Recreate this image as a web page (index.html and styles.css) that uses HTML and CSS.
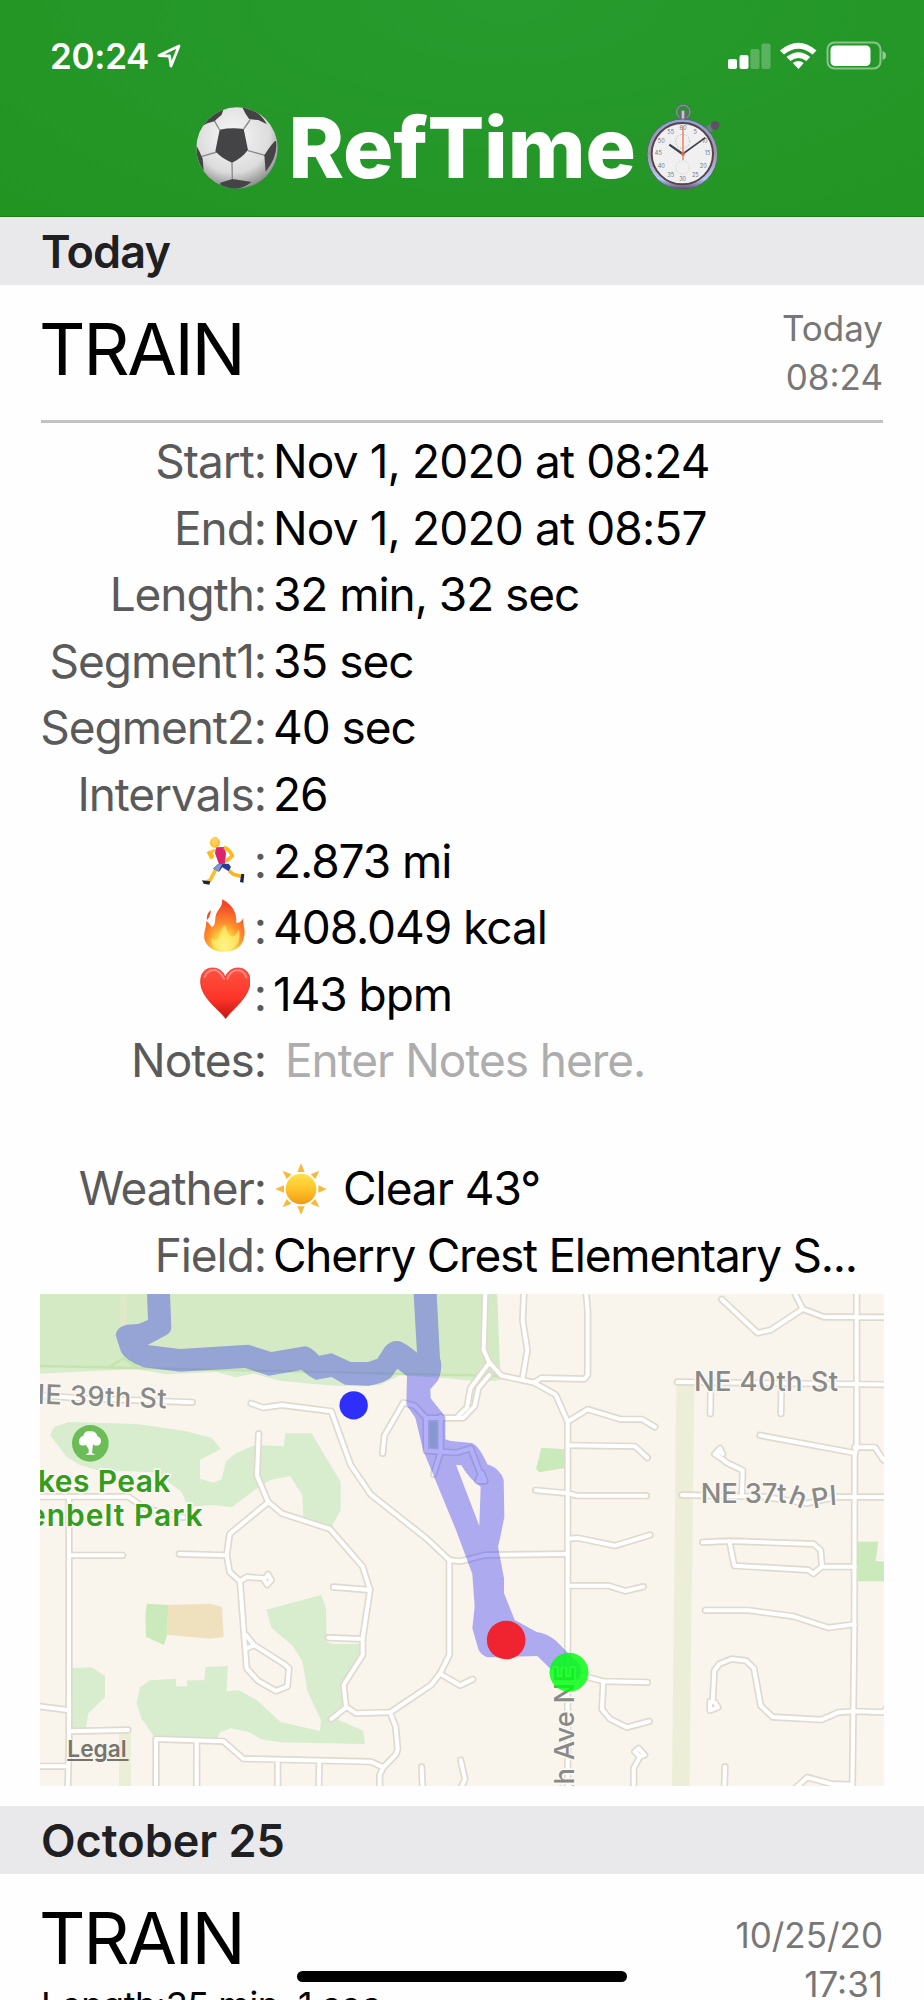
FILE: index.html
```html
<!DOCTYPE html>
<html lang="en">
<head>
    <meta charset="UTF-8">
    <meta name="viewport" content="width=device-width, initial-scale=1.0">
    <title>RefTime</title>
    <link rel="stylesheet" href="styles.css">
</head>
<body>
<div class="phone">
    <header class="header">
        <div class="status">
            <span class="clock">20:24</span>
            <svg class="location" width="24" height="24" viewBox="0 0 24 24">
                <path d="M2 11.5 22 2 14 22 12.5 12Z" fill="none" stroke="#fff" stroke-width="2.8" stroke-linejoin="round"/>
            </svg>
            <svg class="signal" width="160" height="30" viewBox="0 0 160 30" fill="#fff">
                <rect x="0" y="18" width="9" height="10" rx="2"/>
                <rect x="11.500" y="14" width="9" height="14" rx="2"/>
                <rect x="22.500" y="8" width="9" height="20" rx="2" opacity=".25"/>
                <rect x="33.500" y="2.500" width="9" height="25.500" rx="2" opacity=".25"/>
                <path d="M52 9.500Q70.500-6 88.500 9.500L84.500 13.600Q70.500 2 56 13.600Z"/>
                <path d="M58.500 16Q70.500 6.500 82.200 16L78.300 20Q70.500 14 62.500 20Z"/>
                <path d="M64.800 22Q70.500 18 75.700 22L70.500 28Z"/>
                <rect x="99.500" y="1.500" width="53" height="26" rx="7" fill="none" stroke="#fff" stroke-width="2" opacity=".45"/>
                <rect x="102.500" y="4.500" width="40" height="20.500" rx="4.500"/>
                <path d="M154.500 10v9q3.500-1 3.500-4.500t-3.500-4.500Z" opacity=".5"/>
            </svg>
        </div>
        <div class="brand">
            <svg class="ball" width="84" height="84" viewBox="0 0 252 252">
                <defs>
                    <radialGradient id="ball-skin" cx=".45" cy=".35" r=".65">
                        <stop offset="0" stop-color="#f8f8f8"/>
                        <stop offset=".7" stop-color="#dcdcdc"/>
                        <stop offset="1" stop-color="#8f8f8f"/>
                    </radialGradient>
                    <clipPath id="ball-clip"><circle cx="126" cy="126" r="122"/></clipPath>
                </defs>
                <circle cx="126" cy="126" r="122" fill="url(#ball-skin)"/>
                <g clip-path="url(#ball-clip)">
                    <path d="M74 72 58 44M146 69 165 42M159 134 210 148M111 170 112 220M66 138 18 152" fill="none" stroke="#8b8b8b" stroke-width="4"/>
                    <g fill="#444446">
                        <path d="M74 71Q110 64 146 69L159 132Q140 157 111 170 82 159 61 136Z"/>
                        <path d="M18 62Q40 22 86 8L80 26 58 46Q36 50 18 62Z"/>
                        <path d="M140 0Q190 8 216 55L190 42 163 40Q150 22 144 8Z"/>
                        <path d="M243 105Q250 150 212 197L208 148Q225 120 240 105Z"/>
                        <path d="M4 118Q0 155 26 196L23 158 14 138Z"/>
                        <path d="M76 230 112 219 170 228Q140 250 110 250Q88 246 76 236Z"/>
                    </g>
                </g>
            </svg>
            <h1>RefTime</h1>
            <svg class="stopwatch" width="76" height="88" viewBox="0 0 228 264">
                <defs>
                    <linearGradient id="watch-rim" x1="0" y1="0" x2="0" y2="1">
                        <stop offset="0" stop-color="#86a8d8"/>
                        <stop offset=".5" stop-color="#9a9aa2"/>
                        <stop offset=".85" stop-color="#b0cdf5"/>
                        <stop offset="1" stop-color="#55496a"/>
                    </linearGradient>
                </defs>
                <circle cx="112" cy="25" r="21" fill="none" stroke="#59716c" stroke-width="8"/>
                <circle cx="112" cy="24" r="20" fill="none" stroke="#a7b7b4" stroke-width="2"/>
                <rect x="101" y="19" width="21" height="28" rx="4" fill="#6b6670"/>
                <rect x="107" y="20" width="8" height="25" fill="#c3c8d2"/>
                <path d="M180 68 205 50 218 64 194 84Z" fill="#6f7b8c"/>
                <circle cx="207" cy="64" r="13" fill="#5b5362"/>
                <circle cx="109" cy="151" r="106" fill="url(#watch-rim)" stroke="#676269" stroke-width="3"/>
                <circle cx="109" cy="149" r="92" fill="#f1f0f1" stroke="#5d4049" stroke-width="6"/>
                <g fill="none" stroke="#a8a8a8" stroke-width="2" stroke-dasharray="5 4">
                    <circle cx="110" cy="112" r="21"/>
                    <circle cx="110" cy="190" r="20" opacity=".6"/>
                </g>
                <g class="dial">
                    <text x="111" y="78">60</text><text x="148" y="89">5</text><text x="176" y="116">10</text>
                    <text x="185" y="153">15</text><text x="172" y="191">20</text><text x="148" y="218">25</text>
                    <text x="110" y="230">30</text><text x="74" y="218">35</text><text x="46" y="191">40</text>
                    <text x="37" y="153">45</text><text x="46" y="116">50</text><text x="74" y="89">55</text>
                </g>
                <path d="M110 150 70 122" stroke="#3b4250" stroke-width="7"/>
                <path d="M110 150 178 101" stroke="#3b4250" stroke-width="5"/>
                <path d="M111 66V168" stroke="#f2744e" stroke-width="4"/>
                <circle cx="111" cy="149" r="6" fill="#df6544"/>
            </svg>
        </div>
    </header>

    <h2 class="day today">Today</h2>

    <section class="session">
        <div class="summary">
            <h3>TRAIN</h3>
            <p class="when">Today<br>08:24</p>
        </div>
        <dl class="details">
            <dt>Start:</dt><dd class="date">Nov 1, 2020 at 08:24</dd>
            <dt>End:</dt><dd class="date">Nov 1, 2020 at 08:57</dd>
            <dt>Length:</dt><dd>32 min, 32 sec</dd>
            <dt>Segment1:</dt><dd>35 sec</dd>
            <dt>Segment2:</dt><dd>40 sec</dd>
            <dt>Intervals:</dt><dd>26</dd>
            <dt>
                <svg class="emoji" width="54" height="54" viewBox="0 0 162 162">
                    <path d="M62 47 45 54 50 67 68 52Z" fill="#ffc22e"/>
                    <path d="M38 57 47 53 61 68 57 77 48 77Z" fill="#ffb91f"/>
                    <path d="M66 108 48 142 37 147" fill="none" stroke="#ffbd2c" stroke-width="11"/>
                    <path d="M105 113 118 124 148 131" fill="none" stroke="#ffb51d" stroke-width="11"/>
                    <circle cx="63" cy="29" r="15" fill="#ffbc29"/>
                    <path d="M53 21Q50 34 60 40L72 34 71 13Q56 8 51 21Z" fill="#ffcf55"/>
                    <path d="M67 43 90 42 96 61 93 92 75 94 63 61Z" fill="#dc246e"/>
                    <path d="M90 43Q106 49 115 69L95 85" fill="none" stroke="#ffb91f" stroke-width="11" stroke-linejoin="round"/>
                    <path d="M71 94 104 92 111 102 104 115 85 103 75 116 57 107Z" fill="#273d91"/>
                    <path d="M71 94 85 94 73 116 57 107Z" fill="#7b98d1"/>
                    <path d="M24 142 49 145 46 155 29 152Z" fill="#12234c"/>
                    <path d="M142 122 151 124 148 149 138 147Z" fill="#12234c"/>
                </svg><span>:</span>
            </dt><dd>2.873 mi</dd>
            <dt>
                <svg class="emoji" width="54" height="54" viewBox="0 0 162 162">
                    <defs>
                        <radialGradient id="flame" cx=".5" cy=".9" r=".8">
                            <stop offset="0" stop-color="#fff9a0"/>
                            <stop offset=".3" stop-color="#ffd63f"/>
                            <stop offset=".58" stop-color="#ff8a2b"/>
                            <stop offset="1" stop-color="#f14627"/>
                        </radialGradient>
                    </defs>
                    <path d="M84 1C111 13 130 40 127 72 139 73 142 65 148 58 145 77 156 91 150 115 145 142 124 158 93 158 60 160 37 143 31 119 28 97 39 83 36 67 47 70 51 85 54 84 65 79 62 67 65 51 69 31 88 25 84 1Z" fill="url(#flame)"/>
                    <path d="M51 34Q36 43 39 63 49 54 51 34Z" fill="#f44d2c"/>
                    <path d="M91 79C105 97 97 110 116 113 130 107 133 92 134 91 144 127 125 155 91 156 60 153 49 135 53 116 58 120 63 129 70 122 80 110 76 99 91 79Z" fill="#fff17c" opacity=".65"/>
                </svg><span>:</span>
            </dt><dd>408.049 kcal</dd>
            <dt>
                <svg class="emoji heart" width="54" height="54" viewBox="0 0 162 162">
                    <defs>
                        <linearGradient id="heart" x1="0" y1="0" x2="0" y2="1">
                            <stop offset="0" stop-color="#ff5142"/>
                            <stop offset=".6" stop-color="#fb3528"/>
                            <stop offset="1" stop-color="#c71311"/>
                        </linearGradient>
                    </defs>
                    <path d="M89 158C71 132 16 96 14 51 12 18 31 5 52 6 70 7 82 17 88 34 94 17 107 7 124 6 147 5 164 20 162 50 160 95 106 132 89 158Z" fill="url(#heart)" stroke="#df2a20" stroke-width="2"/>
                    <path d="M26 33Q37 8 60 13 75 19 84 38M94 38Q103 14 125 13 142 12 151 34" fill="none" stroke="#ff9a8d" stroke-width="6" stroke-linecap="round" opacity=".8"/>
                </svg><span>:</span>
            </dt><dd>143 bpm</dd>
            <dt class="notes">Notes:</dt><dd class="placeholder">Enter Notes here.</dd>
            <dt class="weather">Weather:</dt>
            <dd class="weather">
                <svg class="sun" width="54" height="54" viewBox="0 0 162 162">
                    <defs>
                        <linearGradient id="sun" x1="0" y1="0" x2="0" y2="1">
                            <stop offset="0" stop-color="#ffe14b"/>
                            <stop offset=".5" stop-color="#ffc42b"/>
                            <stop offset="1" stop-color="#f19a12"/>
                        </linearGradient>
                    </defs>
                    <path d="M81 4 92 30H70ZM81 158 92 133H70ZM4 81 30 70V92ZM158 81 133 70V92ZM26 26 52 37 38 51ZM136 26 124 51 110 37ZM26 136 38 111 52 125ZM136 136 110 125 124 111Z" fill="#fcb638"/>
                    <circle cx="81" cy="81" r="46" fill="url(#sun)"/>
                </svg>
                <span>Clear 43°</span>
            </dd>
            <dt>Field:</dt><dd class="field">Cherry Crest Elementary S...</dd>
        </dl>

        <svg class="map" width="844" height="492" viewBox="30 42 2532 1476">
            <defs>
                <!-- every street, stroked twice: wide grey casing, narrow white road -->
                <g id="streets">
                    <path d="M20 345 150 355 487 367"/>
                    <path d="M663 370 699 383 755 375 904 394 962 555 1022 643 1190 776 1258 840V1125L1230 1181 1203 1215 1081 1297 978 1300 948 1280 941 1215 998 1125V1075L1020 930 998 860 900 747 755 700 714 665 681 587 686 461"/>
                    <path d="M714 667 599 762 590 825 599 876 630 904 650 1165 685 1203 738 1233 772 1219 777 1165 765 1154 672 1095 648 1065M650 1105 672 1096"/>
                    <path d="M630 904 650 891 702 895"/>
                    <path d="M702 900 714 883 724 900 712 914ZM448 822 590 826M910 921 1020 930M895 1073 998 1077M904 1317 948 1282"/>
                    <path d="M20 650H295L345 685 460 712M117 650V1400L113 1530M117 826H278M20 1278 113 1290M117 1354 294 1350M20 1459H113"/>
                    <path d="M378 1530V1377L580 1384 640 1436 1022 1445 1060 1462 1098 1423 1103 1408 1097 1340 1081 1299M500 1382V1530M743 1439V1530M868 1442 866 1530M1060 1462 1049 1485V1530"/>
                    <path d="M1230 1181 1290 1216 1328 1198M1175 1461 1178 1530M1292 1440 1305 1498 1290 1530"/>
                    <path d="M1058 520 1063 467 1120 368 1155 378 1188 414H1300L1334 378 1345 325 1378 285"/>
                    <path d="M1285 408 1311 383 1321 325 1378 248 1361 210 1366 35"/>
                    <path d="M1378 248 1414 287 1512 308 1577 344 1613 425V1530"/>
                    <path d="M1482 35 1478 120 1492 210 1478 293M1668 35 1673 95V285L1663 297 1534 294 1512 308"/>
                    <path d="M1188 414V512L1234 515 1280 518 1322 505 1352 583 1343 603 1365 603 1356 580M1232 410V515L1211 583"/>
                    <path d="M1613 425 1673 388 1772 418H1836L1875 441M1613 496 1815 499 1852 533"/>
                    <path d="M1517 631 1615 640 1640 647H1849M1613 776 1644 774 1755 797 1860 765"/>
                    <path d="M1258 840 1290 844 1367 825 1613 822M1613 917H1735L1786 933 1840 920"/>
                    <path d="M1650 1185 1720 1204 1852 1207M1720 1204 1716 1288 1740 1317 1790 1342 1858 1324M1811 1530V1465L1830 1430 1814 1415 1826 1405 1844 1425 1830 1430"/>
                    <path d="M2075 58 2183 159 2222 150 2318 87 2382 111H2480L2580 112M2318 87 2292 35M2480 35V500L2474 525 2473 1050 2467 1530"/>
                    <path d="M1942 306 2580 314M2042 330 2041 401M2254 330 2253 401M2190 466 2474 519M2474 502H2535L2560 540"/>
                    <path d="M1956 645 2200 650 2330 670 2420 651H2580M2070 505 2054 522 2074 535 2090 548 2138 571 2136 645M2070 505 2078 522"/>
                    <path d="M2018 787 2098 783 2350 792 2372 810 2376 860 2350 881 2335 870 2113 857 2098 783M2376 860H2474"/>
                    <path d="M2026 991H2156L2290 1009 2395 1043 2474 1033"/>
                    <path d="M2048 1265 2053 1172 2068 1152 2105 1137 2148 1142 2172 1165 2192 1277 2228 1311 2375 1319 2425 1297 2474 1294 2560 1297 2580 1270"/>
                    <path d="M2040 1265 2055 1268 2064 1282 2040 1291ZM2085 1460 2083 1530M2290 1530 2332 1492 2405 1512 2467 1514"/>
                </g>
            </defs>
            <rect x="30" y="42" width="2532" height="1476" fill="#f9f4ec"/>

            <!-- parks -->
            <g fill="#d7edcd">
                <path d="M30 260 1380 270 1400 42H1402L1411 300 1360 306 1250 295 1110 286 1050 315 930 318 840 311 750 302 670 281 615 292 560 276 410 283 320 268 200 272 30 281Z"/>
                <path d="M60 465 72 441 117 426 320 432 465 453 545 473 572 507 510 540V596L550 608 575 598 588 543 618 520 675 495 762 499 766 460H845L880 520 932 605V690L905 740 820 710 817 645 780 588 720 600 670 633 605 682 550 675 473 680 455 635 420 610 400 590 370 577 200 570 150 555 110 530Z"/>
                <path d="M117 1165 185 1162 225 1188V1252L175 1300 167 1345H117Z"/>
                <path d="M320 1270 330 1222 360 1201 438 1196 438 1219H472V1201H523L527 1161 593 1158 590 1234 627 1231 680 1260 752 1326 870 1353 873 1320 832 1233 817 1143 788 1097 724 1043 709 989 874 945 888 985 890 1085 910 1092H998V1125L941 1215 948 1280 925 1320 1000 1352 1005 1392 750 1387 695 1378 655 1355 604 1345 570 1357 562 1375 372 1370 345 1330 335 1318Z"/>
            </g>
            <path d="M30 42H1400L1410 288 30 258Z" fill="#d4eac4"/>
            <path d="M272 42H290V140H268Z" fill="#dfe9c8"/>
            <path d="M30 258 1410 288M232 265 280 235 325 265" fill="none" stroke="#c5e3ac" stroke-width="7"/>
            <g fill="#cbeabb">
                <path d="M350 971 415 975 411 1065 402 1095 348 1070 346 1010Z"/>
                <path d="M1534 503 1606 508V564L1528 577 1518 567Z"/>
                <path d="M2480 785H2545L2537 843 2562 845V904H2480Z"/>
            </g>
            <path d="M415 975 540 971 576 981 581 1071 540 1076 411 1064Z" fill="#efe1bd"/>
            <path d="M1939 318H1993L1978 1518H1926ZM267 1360H303V1518H267Z" fill="#eceed7"/>
            <path d="M1192 418H1228V510H1192Z" fill="#bad8bd"/>

            <use href="#streets" class="casing"/>
            <use href="#streets" class="road"/>
            <g class="tip"><path d="M2070 504 2080 524 2054 522Z"/></g>

            <!-- recorded route -->
            <g fill="#2828f5" opacity=".36">
                <path fill-rule="evenodd" d="M351 42H420L424 145Q422 162 400 170L353 195 450 207 655 194 724 216 825 199Q842 200 867 227L905 220 962 246H1014L1042 236 1065 200Q1085 178 1110 184 1130 192 1161 218L1151 42H1220L1230 235Q1240 262 1225 300L1201 328 1202 355 1246 410V478L1262 483 1325 489Q1345 494 1372 553 1410 565 1421 600L1423 710 1410 775 1404 800 1422 895V940L1454 1020 1520 1056Q1550 1060 1578 1082L1625 1130Q1670 1160 1645 1200 1605 1210 1565 1170L1522 1128 1380 1132Q1350 1130 1343 1100L1327 1045 1334 980 1327 882 1278 750 1180 512 1156 413 1129 374 1131 288 1102 266 1085 290Q1070 307 1015 318L945 314 905 291 858 299Q840 292 815 270L717 287 645 264 450 275 340 262Q285 240 273 215L257 165Q260 140 290 134L325 132 354 120ZM1278 554 1348 738 1352 620Q1320 600 1294 556Z"/>
            </g>
            <circle cx="971" cy="376" r="42.500" fill="#2f2ffc"/>
            <circle cx="1428.500" cy="1080" r="58" fill="#f02330"/>

            <g class="street-name">
                <text transform="translate(-18 370) rotate(2)" textLength="427">NE 39th St</text>
                <text x="1992" y="332" textLength="432">NE 40th St</text>
                <text x="2012" y="669" textLength="258">NE 37t</text>
                <text transform="translate(2272 668) rotate(22)">h</text>
                <text transform="translate(2350 686) rotate(-10)">P</text>
                <text transform="translate(2401 676) rotate(-4)">l</text>
                <text transform="translate(1633 1542) rotate(-90)" textLength="384">th Ave NE</text>
            </g>
            <circle cx="1617" cy="1177" r="58.500" fill="#00ff10" opacity=".83"/>

            <circle cx="181" cy="490" r="55" fill="#6cbd58"/>
            <path d="M175 493 164 496Q146 500 147 484 148 470 160 467 164 451 180 454 198 452 202 468 214 473 213 485 210 500 192 496L189 492 186 518 196 524H166L176 518V507L168 496Z" fill="#fff"/>
            <g class="park-name">
                <text x="24" y="636" textLength="397">kes Peak</text>
                <text x="-6" y="738" textLength="524">enbelt Park</text>
            </g>
            <text class="legal" x="112" y="1432" textLength="178">Legal</text>
            <path d="M112 1440H189M205 1440H218M231 1440H296" stroke="#75756e" stroke-width="6"/>
        </svg>
    </section>

    <h2 class="day">October 25</h2>

    <section class="session">
        <div class="summary past">
            <h3>TRAIN</h3>
            <p class="when">10/25/20<br>17:31</p>
        </div>
        <p class="total">Length:35 min, 1 sec</p>
    </section>
    <div class="home-bar"></div>
</div>
</body>
</html>
```

FILE: styles.css
```css
body {
    margin: 0;
    font-family: Inter, "Liberation Sans", sans-serif;
    background-color: #fefefe;
    color: #000;
}
h1, h2, h3, p, dl, dd {
    margin: 0;
}
svg {
    display: block;
    flex: none;
}
.phone {
    position: relative;
    height: 2000px;
    overflow: hidden;
}

/* Header */
.header {
    height: 217px;
    box-sizing: border-box;
    padding-top: 34px;
    background: radial-gradient(ellipse at 55% 0, #289b2e 0, #249728 55%, #219422 100%);
    border-bottom: 1px solid #168016;
    color: #fff;
}
.status {
    display: flex;
    align-items: center;
    height: 43px;
    padding: 0 36px 0 50px;
}
.clock {
    width: 107px;
    font-size: 35px;
    font-weight: 600;
    letter-spacing: -0.3px;
}
.signal {
    margin-left: auto;
}
.brand {
    display: flex;
    justify-content: center;
    align-items: center;
    height: 142px;
    padding-right: 8px;
}
h1 {
    width: 357px;
    margin-left: 10px;
    font-size: 84px;
    line-height: 100px;
    font-weight: 800;
    letter-spacing: -0.2px;
    white-space: nowrap;
}
.dial {
    font-size: 17px;
    fill: #77777b;
    text-anchor: middle;
}

/* Session list */
.day {
    height: 68px;
    padding-left: 41px;
    background-color: #e9e9eb;
    color: #202022;
    font-size: 45px;
    line-height: 69px;
    font-weight: 600;
}
.today {
    letter-spacing: -0.8px;
}
.session {
    padding: 0 41px 20px;
}
.summary {
    display: flex;
    justify-content: space-between;
    height: 135px;
    border-bottom: 3px solid #c2c2c4;
}
h3 {
    margin-left: -2px;
    padding-top: 20px;
    font-size: 72px;
    line-height: 88px;
    font-weight: 400;
    letter-spacing: -2.3px;
}
.when {
    padding-top: 19px;
    color: #777;
    font-size: 35px;
    line-height: 49px;
    text-align: right;
}
.details {
    display: grid;
    grid-template-columns: 225px 1fr;
    column-gap: 7px;
    padding-top: 5px;
    font-size: 46px;
    line-height: 66.6px;
    letter-spacing: -1.05px;
    white-space: nowrap;
}
.details dt {
    display: flex;
    justify-content: flex-end;
    height: 66.6px;
    color: #5a5a5a;
}
.details dd {
    height: 66.6px;
}
.details .date {
    letter-spacing: -0.85px;
}
.details .field {
    letter-spacing: -1.25px;
}
.emoji {
    margin: 5px 6px 0 0;
}
.heart {
    margin-right: 4px;
}
.details .placeholder {
    padding-left: 12px;
    color: #adadad;
}
.details .weather {
    margin-top: 61px;
}
dd.weather {
    display: flex;
    gap: 15px;
}
.sun {
    margin: 7px 0 0 1px;
}
.map {
    margin: 6px 0 0 -1px;
}
.past {
    height: 109px;
    border: 0;
}
.past .when {
    padding-top: 37px;
}
.total {
    font-size: 36px;
    line-height: 44px;
    letter-spacing: -0.5px;
}

/* Map */
#streets path {
    fill: none;
    stroke-linecap: round;
    stroke-linejoin: round;
}
.casing {
    stroke: #e0d9ce;
    stroke-width: 22;
}
.road {
    stroke: #fff;
    stroke-width: 12;
}
.tip {
    fill: #fff;
}
.street-name, .park-name, .legal {
    paint-order: stroke;
    stroke: #fbf8f2;
    stroke-width: 10;
    stroke-linejoin: round;
}
.street-name {
    fill: #898987;
    font-size: 82px;
    font-weight: 500;
}
.park-name {
    fill: #349d1b;
    font-size: 90px;
    font-weight: 600;
}
.legal {
    fill: #75756e;
    font-size: 68px;
    font-weight: 600;
    stroke-width: 4;
}

.home-bar {
    position: absolute;
    left: 297px;
    top: 1971px;
    width: 330px;
    height: 11px;
    border-radius: 6px;
    background-color: #000;
}
```
